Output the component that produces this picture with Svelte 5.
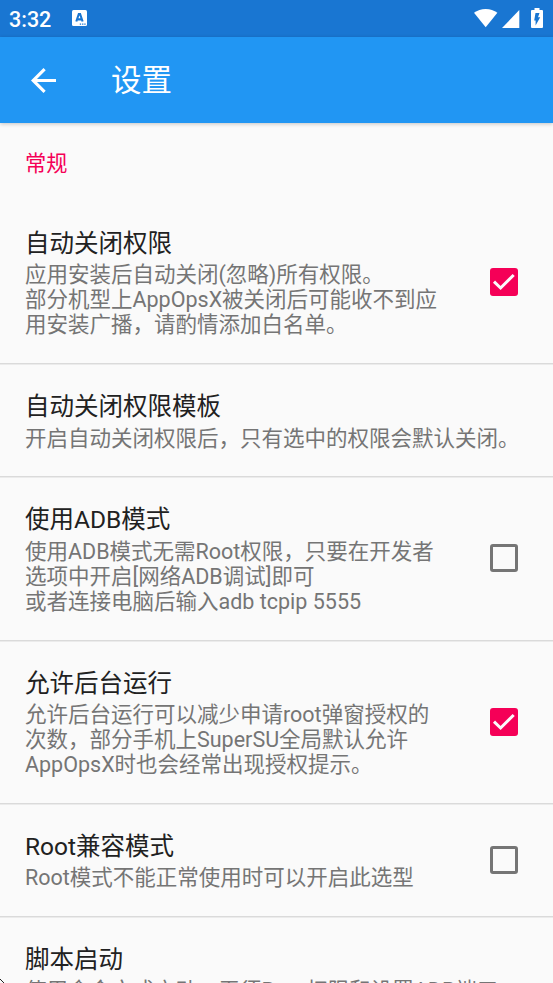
<script lang="ts">
    type Preference = {
        title: string;
        summary: string[];
        checked?: boolean;
    };

    let preferences = $state<Preference[]>([
        {
            title: '自动关闭权限',
            summary: ['应用安装后自动关闭(忽略)所有权限。', '部分机型上AppOpsX被关闭后可能收不到应', '用安装广播，请酌情添加白名单。'],
            checked: true
        },
        {
            title: '自动关闭权限模板',
            summary: ['开启自动关闭权限后，只有选中的权限会默认关闭。']
        },
        {
            title: '使用ADB模式',
            summary: ['使用ADB模式无需Root权限，只要在开发者', '选项中开启[网络ADB调试]即可', '或者连接电脑后输入adb tcpip 5555'],
            checked: false
        },
        {
            title: '允许后台运行',
            summary: ['允许后台运行可以减少申请root弹窗授权的', '次数，部分手机上SuperSU全局默认允许', 'AppOpsX时也会经常出现授权提示。'],
            checked: true
        },
        {
            title: 'Root兼容模式',
            summary: ['Root模式不能正常使用时可以开启此选型'],
            checked: false
        },
        {
            title: '脚本启动',
            summary: ['使用命令方式启动，无须Root权限和设置ADB端口']
        }
    ]);

    function toggle(item: Preference) {
        if (item.checked !== undefined) {
            item.checked = !item.checked;
        }
    }
</script>

<div class="screen">
    <div class="status-bar">
        <span class="clock">3:32</span>
        <svg class="notification" width="15" height="16" viewBox="0 0 15 16">
            <rect width="15" height="16" rx="1.5" fill="#fff" />
            <path d="M4.3 11.5 6.8 4h1.3l2.5 7.5M5.2 9.4h4.4" fill="none" stroke="#1976d2" stroke-width="2.1" />
            <path d="M7.8 14.2h1.3M10.1 14.2h1.3M12.3 14.2h1.3" stroke="#1976d2" stroke-width="1.3" />
        </svg>
        <div class="indicators">
            <svg width="24" height="19" viewBox="0 0 24 19">
                <path d="M0 3.8C3.3 1.3 7.3 0 11.7 0s8.4 1.3 11.7 3.8L11.7 18.3z" fill="#fff" />
            </svg>
            <svg class="signal" width="18" height="18" viewBox="0 0 18 18">
                <path d="M17.3 0v18H0z" fill="#fff" />
            </svg>
            <svg class="battery" width="12" height="20" viewBox="0 0 12 20">
                <path d="M3.5 0h5v2H11q1 0 1 1v16q0 1-1 1H1q-1 0-1-1V3q0-1 1-1h2.5z" fill="#fff" />
                <path d="M4.5 5h4L7 9.2h2.2L4.6 17.5v-5H3.2z" fill="#1976d2" />
            </svg>
        </div>
    </div>

    <header class="toolbar">
        <button class="back" aria-label="返回">
            <svg width="25" height="25" viewBox="0 0 16 16">
                <path d="M16 7H3.83l5.59-5.59L8 0 0 8l8 8 1.41-1.41L3.83 9H16z" fill="#fff" />
            </svg>
        </button>
        <h1>设置</h1>
    </header>

    <main>
        <h2 class="category">常规</h2>
        {#each preferences as item}
            <button class="preference" onclick={() => toggle(item)}>
                <span class="texts">
                    <span class="title">{item.title}</span>
                    {#each item.summary as line}
                        <span class="summary">{line}</span>
                    {/each}
                </span>
                {#if item.checked !== undefined}
                    <span class="checkbox" class:checked={item.checked}>
                        {#if item.checked}
                            <svg width="28" height="28" viewBox="0 0 28 28">
                                <path d="M4 13.7l6.6 6.3L23.7 7" fill="none" stroke="#fafafa" stroke-width="3" />
                            </svg>
                        {/if}
                    </span>
                {/if}
            </button>
        {/each}
    </main>

    <svg class="corner" width="5" height="4" viewBox="0 0 5 4">
        <path d="M0 .5h1M1 1.5h1M2 2.5h1M3 3.5h1" stroke="#222" stroke-width="1" />
    </svg>
</div>

<style>
    :global(body) {
        margin: 0;
        overflow: hidden;
    }

    .screen {
        position: relative;
        width: 553px;
        height: 983px;
        overflow: hidden;
        display: flex;
        flex-direction: column;
        background: #fafafa;
        font-family: Roboto, 'Noto Sans CJK SC', sans-serif;
    }

    .status-bar {
        flex: none;
        height: 37px;
        box-sizing: border-box;
        padding: 0 10px 0 9px;
        display: flex;
        align-items: center;
        background: #1976d2;
        color: #fff;
    }

    .clock {
        width: 63px;
        font-size: 21.5px;
        font-weight: 500;
        line-height: 37px;
        padding-top: 2px;
    }

    .notification {
        margin-bottom: 1px;
    }

    .indicators {
        display: flex;
        align-items: center;
        margin-left: auto;
        padding-bottom: 1px;
    }

    .signal {
        margin: 1px 0 0 4px;
    }

    .battery {
        margin-left: 11px;
    }

    .toolbar {
        flex: none;
        height: 86px;
        display: flex;
        align-items: center;
        background: #2196f3;
        color: #fff;
        box-shadow: 0 1px 4px rgba(0, 0, 0, 0.22);
    }

    .back {
        width: 86px;
        height: 86px;
        padding: 0;
        border: none;
        background: none;
        display: flex;
        align-items: center;
        justify-content: center;
    }

    h1 {
        margin: 2px 0 0 25px;
        font-size: 30.5px;
        font-weight: 400;
        line-height: 40px;
    }

    main {
        flex: 1;
        min-height: 0;
    }

    .category {
        box-sizing: border-box;
        height: 78px;
        margin: 0;
        padding-left: 25px;
        font-size: 21.2px;
        font-weight: 400;
        line-height: 81px;
        color: #f50057;
    }

    .preference {
        width: 100%;
        box-sizing: border-box;
        display: flex;
        align-items: center;
        justify-content: space-between;
        padding: 24.1px 35px 25.7px 25px;
        border: none;
        border-bottom: 1px solid #dadada;
        box-shadow: 0 1px #ebebeb;
        background: none;
        font-family: inherit;
        text-align: left;
    }

    .preference:last-child {
        border-bottom: none;
    }

    .title,
    .summary {
        display: block;
        white-space: nowrap;
    }

    .title {
        font-size: 24.5px;
        line-height: 37.2px;
        color: #212121;
    }

    .summary {
        font-size: 21.5px;
        line-height: 25.1px;
        color: #757575;
    }

    .checkbox {
        flex: none;
        width: 28px;
        height: 28px;
        box-sizing: border-box;
        margin-top: 1.4px;
        border: 3px solid #757575;
        border-radius: 3px;
    }

    .checkbox.checked {
        border: none;
        background: #f50057;
    }

    .checkbox svg {
        display: block;
    }

    /* tip of the pointer resting on the screen edge */
    .corner {
        position: absolute;
        left: 0;
        bottom: 0;
    }
</style>
